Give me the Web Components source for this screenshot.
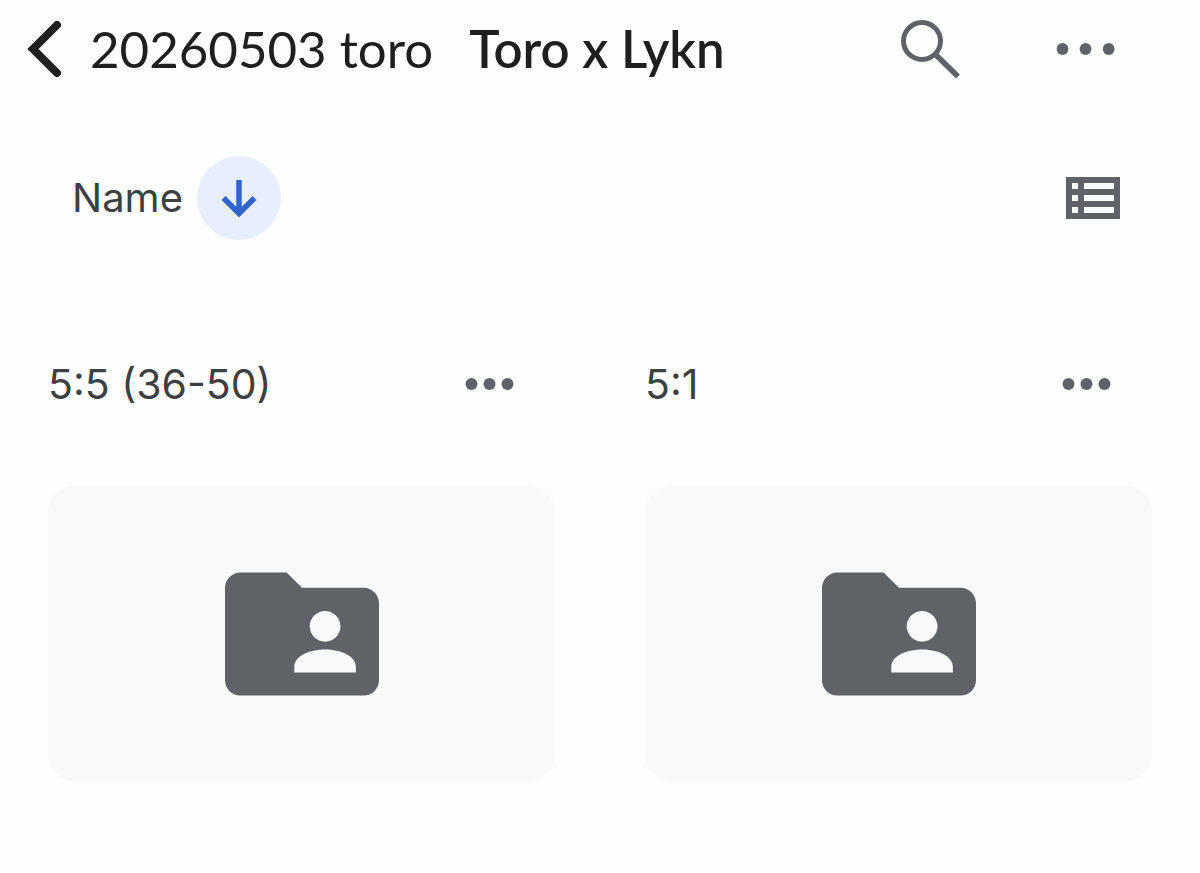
<!DOCTYPE html>
<html lang="en">
<head>
<meta charset="utf-8">
<meta name="viewport" content="width=device-width, initial-scale=1">
<title>Toro x Lykn</title>
<style>
  body {
    margin: 0;
    background: #fefefe;
    color: #3c4043;
    font-family: Inter, "Open Sans", sans-serif;
    font-size: 41px;
    line-height: 48px;
  }
</style>
</head>
<body>
<drive-header>
  <a slot="path" href="#parent">20260503 toro</a>
  <a slot="path" href="#current" aria-current="page">Toro x Lykn</a>
</drive-header>
<drive-sort>Name</drive-sort>
<drive-grid>
  <drive-folder>5:5 (36-50)</drive-folder>
  <drive-folder>5:1</drive-folder>
</drive-grid>

<script>
const base = `
  button {
    display: block;
    margin: 0;
    padding: 0;
    border: 0;
    background: none;
    color: #5f6368;
    font: inherit;
    cursor: pointer;
  }
  svg {
    display: block;
  }
`;

class DriveHeader extends HTMLElement {
  constructor() {
    super();
    this.attachShadow({ mode: 'open' });
    this.shadowRoot.innerHTML = `
      <style>
        ${base}
        :host {
          display: flex;
          align-items: center;
          height: 98px;
          padding: 0 84px 0 26px;
          color: #1f1f1f;
          font-family: Lato, sans-serif;
          font-size: 51px;
          line-height: 60px;
        }
        nav {
          display: flex;
          flex: 1;
          gap: 36px;
          min-width: 0;
          margin-left: 26px;
          white-space: nowrap;
        }
        ::slotted(a) {
          color: inherit;
          text-decoration: none;
        }
        ::slotted(a[aria-current]) {
          font-weight: 600;
        }
        .back {
          color: #1f1f1f;
        }
        .actions {
          display: flex;
          align-items: center;
          gap: 96px;
        }
      </style>
      <button class="back" aria-label="Back">
        <svg width="38" height="60" viewBox="0 0 38 60" fill="none" stroke="currentColor" stroke-width="8" stroke-linecap="round" stroke-linejoin="miter">
          <path d="M31 6L7 30L31 54"/>
        </svg>
      </button>
      <nav aria-label="Folders"><slot name="path"></slot></nav>
      <div class="actions">
        <button aria-label="Search">
          <svg width="60" height="60" viewBox="0 0 60 60" fill="none" stroke="currentColor">
            <circle cx="22" cy="22" r="18.500" stroke-width="5"/>
            <path d="M35 35L58 57.500" stroke-width="5.500"/>
          </svg>
        </button>
        <button aria-label="More">
          <svg width="60" height="12" viewBox="0 0 60 12" fill="currentColor">
            <circle cx="6.500" cy="6" r="5.900"/>
            <circle cx="29.500" cy="6" r="5.900"/>
            <circle cx="52.700" cy="6" r="5.900"/>
          </svg>
        </button>
      </div>
    `;
  }
}

class DriveSort extends HTMLElement {
  constructor() {
    super();
    this.attachShadow({ mode: 'open' });
    this.shadowRoot.innerHTML = `
      <style>
        ${base}
        :host {
          display: flex;
          align-items: center;
          justify-content: space-between;
          padding: 58px 80px 0 72px;
          font-size: 40px;
        }
        .sort {
          display: flex;
          align-items: center;
          gap: 14px;
          color: #3c4043;
        }
        .direction {
          display: grid;
          place-items: center;
          width: 84px;
          height: 84px;
          border-radius: 50%;
          background: #e8eefc;
          color: #3065cc;
        }
      </style>
      <button class="sort">
        <slot></slot>
        <span class="direction">
          <svg width="36" height="38" viewBox="0 0 36 38" fill="none" stroke="currentColor" stroke-width="5.500">
            <path d="M18 1V34.500M2.500 19L18 34.500L33.500 19"/>
          </svg>
        </span>
      </button>
      <button aria-label="List view">
        <svg width="54" height="42" viewBox="0 0 54 42" fill="currentColor">
          <path fill-rule="evenodd" d="M0 0H54V42H0ZM6 6V12H12V6ZM6 18V24H12V18ZM6 30V36H12V30ZM18 6V12H48V6ZM18 18V24H48V18ZM18 30V36H48V30Z"/>
        </svg>
      </button>
    `;
  }
}

class DriveGrid extends HTMLElement {
  constructor() {
    super();
    this.attachShadow({ mode: 'open' });
    this.shadowRoot.innerHTML = `
      <style>
        :host {
          display: grid;
          grid-template-columns: 1fr 1fr;
          gap: 90px;
          padding: 120px 48px 90px;
        }
      </style>
      <slot></slot>
    `;
  }
}

class DriveFolder extends HTMLElement {
  constructor() {
    super();
    this.attachShadow({ mode: 'open' });
    this.shadowRoot.innerHTML = `
      <style>
        ${base}
        :host {
          display: block;
          min-width: 0;
        }
        header {
          display: flex;
          align-items: center;
          justify-content: space-between;
          padding-right: 40px;
          margin-bottom: 77px;
        }
        .preview {
          display: grid;
          place-items: center;
          width: 100%;
          aspect-ratio: 507 / 297;
          border-radius: 28px;
          background: #f9f9f9;
        }
      </style>
      <header>
        <span><slot></slot></span>
        <button aria-label="More actions">
          <svg width="50" height="12" viewBox="0 0 50 12" fill="currentColor">
            <circle cx="6.500" cy="6" r="6"/>
            <circle cx="24.500" cy="6" r="6"/>
            <circle cx="42.500" cy="6" r="6"/>
          </svg>
        </button>
      </header>
      <button class="preview" aria-label="Open shared folder">
        <svg width="154" height="126" viewBox="2 4 20 16" fill="currentColor">
          <path d="M20 6h-8l-2-2H4c-1.100 0-2 .9-2 2v12c0 1.100.9 2 2 2h16c1.100 0 2-.9 2-2V8c0-1.100-.9-2-2-2zm-5 3c1.100 0 2 .9 2 2s-.9 2-2 2-2-.9-2-2 .9-2 2-2zm4 8h-8v-.700c0-1.500 2-2.300 4-2.300s4 .8 4 2.300z"/>
        </svg>
      </button>
    `;
  }
}

customElements.define('drive-header', DriveHeader);
customElements.define('drive-sort', DriveSort);
customElements.define('drive-grid', DriveGrid);
customElements.define('drive-folder', DriveFolder);
</script>
</body>
</html>
